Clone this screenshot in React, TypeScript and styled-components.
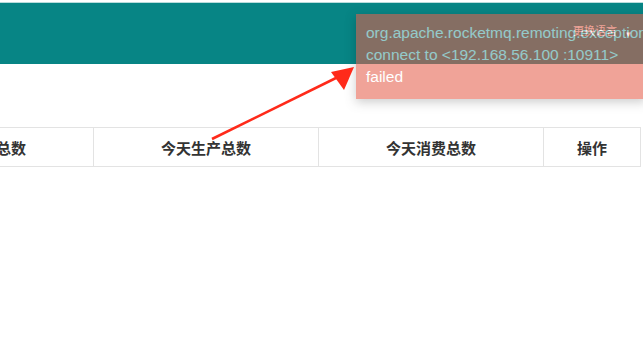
import styled, { createGlobalStyle } from 'styled-components';

const GlobalStyle = createGlobalStyle`
  html, body {
    margin: 0;
    padding: 0;
    overflow: hidden;
    background: #fff;
  }
  body {
    font-family: "Liberation Sans", Arial, "Noto Sans CJK SC", sans-serif;
  }
`;

const columns = [
  { title: '昨日生产总数', width: 224 },
  { title: '今天生产总数', width: 224 },
  { title: '今天消费总数', width: 224 },
  { title: '操作', width: 96 },
];

function App() {
  return (
    <Page>
      <GlobalStyle />
      <Header>
        <LangSwitch>
          更换语言 <Caret>▾</Caret>
        </LangSwitch>
      </Header>
      <Content>
        <Table>
          <thead>
            <tr>
              {columns.map((c) => (
                <Th key={c.title} $width={c.width}>
                  {c.title}
                </Th>
              ))}
            </tr>
          </thead>
        </Table>
      </Content>
      <Toast>
        org.apache.rocketmq.remoting.exception.RemotingConnectException: connect to &lt;192.168.56.100
        :10911&gt; failed
      </Toast>
      <Annotation width="643" height="342" viewBox="0 0 643 342">
        <line x1="212" y1="139" x2="340" y2="76" stroke="#ff2a1a" strokeWidth="2.6" />
        <polygon points="354,67 331,72 344,90" fill="#ff2a1a" />
      </Annotation>
    </Page>
  );
}

var Page = styled.div`
  position: relative;
  width: 643px;
  height: 342px;
  padding-top: 2px;
  box-sizing: border-box;
`;

var Header = styled.header`
  height: 61px;
  background: #078585;
  border-top: 1px solid #b9dcdc;
  display: flex;
  align-items: center;
  justify-content: flex-end;
  padding-right: 12px;
`;

var LangSwitch = styled.div`
  color: #fff;
  font-size: 11px;
  font-family: "Noto Sans CJK SC", sans-serif;
  display: flex;
  align-items: center;
  gap: 9px;
  margin-top: -8px;
`;

var Caret = styled.span`
  font-size: 9px;
  margin-top: 8px;
`;

var Content = styled.main`
  padding-top: 63px;
  margin-left: -132px;
`;

var Table = styled.table`
  border-collapse: collapse;
  table-layout: fixed;
`;

var Th = styled.th<{ $width: number }>`
  width: ${(p) => p.$width}px;
  height: 38px;
  padding: 0;
  border: 1px solid #e3e3e3;
  color: #333;
  font-size: 15px;
  font-weight: bold;
  font-family: "Noto Sans CJK SC", sans-serif;
  text-align: center;
  vertical-align: middle;
`;

var Toast = styled.div`
  position: absolute;
  left: 356px;
  top: 14px;
  width: 270px;
  padding: 8px 10px 11px;
  background: rgb(229, 94, 75);
  opacity: 0.57;
  color: #fff;
  font-size: 15.5px;
  line-height: 22px;
  box-shadow: 0 3px 10px rgba(0, 0, 0, 0.35);
`;

var Annotation = styled.svg`
  position: absolute;
  left: 0;
  top: 0;
  pointer-events: none;
`;

export default App;
